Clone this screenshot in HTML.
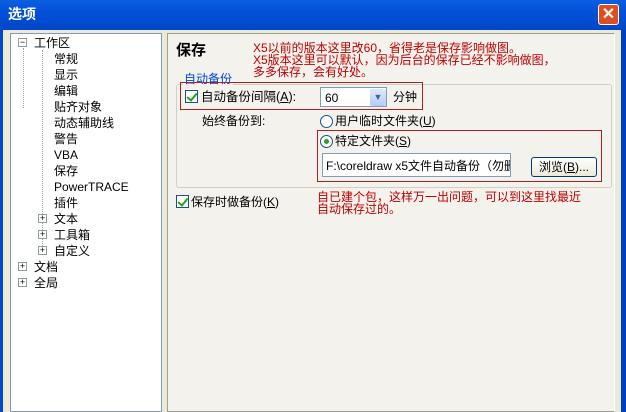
<!DOCTYPE html>
<html><head><meta charset="utf-8"><style>
*{margin:0;padding:0;box-sizing:border-box}
body{width:626px;height:412px;overflow:hidden;background:#ece9d8;font-family:"Liberation Sans","Noto Sans CJK SC","WenQuanYi Zen Hei",sans-serif;font-size:12px;color:#000;position:relative}
.a{position:absolute;white-space:nowrap;line-height:14px}
#title{left:0;top:0;width:626px;height:30px;background:linear-gradient(#0a5fe0,#0350d8 40%,#0047c8);}
.red{color:#c00000;font-size:12px;line-height:13px}
.cb{position:absolute;width:13px;height:13px;border:1px solid #1c5180;background:#fff}
.cb:after{content:"";position:absolute;left:3px;top:0px;width:4px;height:8px;border:solid #21a121;border-width:0 2px 2px 0;transform:rotate(40deg)}
.rb{position:absolute;width:13px;height:13px;border:1px solid #1c5180;border-radius:50%;background:#fff}
.tn{position:absolute;width:9px;height:9px;border:1px solid #919b9c;background:#fff;font-size:9px;line-height:7px;text-align:center;color:#000}
.dot{position:absolute;border-left:1px dotted #a0a0a0}
</style></head><body>
<div class="a" id="title"></div>
<div class="a" style="left:8px;top:7px;color:#fff;font-weight:bold;font-size:14px">选项</div>
<div class="a" style="left:598px;top:4px;width:21px;height:21px;background:#e04e20;border:1px solid #fff;border-radius:3px;color:#fff;font-weight:bold;font-size:16px;line-height:19px;text-align:center">✕</div>
<div class="a" style="left:0;top:30px;width:3px;height:382px;background:#0048d0"></div>
<div class="a" style="left:621px;top:30px;width:5px;height:382px;background:#0040c0"></div>

<div class="a" style="left:10px;top:33px;width:152px;height:379px;background:#fff;border:1px solid #7f9db9"></div>
<div class="a" style="left:167px;top:33px;width:448px;height:379px;background:#f3f2ed;border:1px solid #a0a090;border-right-color:#fff"></div>

<!-- tree -->
<div class="dot" style="left:23px;top:48px;height:60px"></div>
<div class="dot" style="left:42px;top:50px;height:200px"></div>
<div class="tn" style="left:18px;top:38px">−</div>
<div class="a" style="left:34px;top:36px">工作区</div>
<div class="a" style="left:54px;top:52px">常规</div>
<div class="a" style="left:54px;top:68px">显示</div>
<div class="a" style="left:54px;top:84px">编辑</div>
<div class="a" style="left:54px;top:100px">贴齐对象</div>
<div class="a" style="left:54px;top:116px">动态辅助线</div>
<div class="a" style="left:54px;top:132px">警告</div>
<div class="a" style="left:54px;top:148px">VBA</div>
<div class="a" style="left:54px;top:164px">保存</div>
<div class="a" style="left:54px;top:180px">PowerTRACE</div>
<div class="a" style="left:54px;top:196px">插件</div>
<div class="tn" style="left:38px;top:214px">+</div><div class="a" style="left:54px;top:212px">文本</div>
<div class="tn" style="left:38px;top:230px">+</div><div class="a" style="left:54px;top:228px">工具箱</div>
<div class="tn" style="left:38px;top:246px">+</div><div class="a" style="left:54px;top:244px">自定义</div>
<div class="tn" style="left:18px;top:262px">+</div><div class="a" style="left:34px;top:260px">文档</div>
<div class="tn" style="left:18px;top:278px">+</div><div class="a" style="left:34px;top:276px">全局</div>

<!-- right -->
<div class="a" style="left:176px;top:42px;font-size:15px;font-weight:bold;line-height:17px">保存</div>
<div class="a red" style="left:253px;top:42px">X5以前的版本这里改60，省得老是保存影响做图。</div>
<div class="a red" style="left:253px;top:54px">X5版本这里可以默认，因为后台的保存已经不影响做图，</div>
<div class="a red" style="left:253px;top:66px">多多保存，会有好处。</div>
<div class="a" style="left:176px;top:84px;width:436px;height:104px;border:1px solid #d0d0bf;border-radius:3px"></div>
<div class="a" style="left:183px;top:72px;color:#0046d5;background:#f3f2ed;padding:0 1px">自动备份</div>
<div class="a" style="left:180px;top:82px;width:243px;height:28px;border:1px solid #b02020"></div>
<div class="cb" style="left:185px;top:90px"></div>
<div class="a" style="left:201px;top:90px;font-size:12.5px">自动备份间隔(<u>A</u>):</div>
<div class="a" style="left:320px;top:87px;width:67px;height:20px;background:#fff;border:1px solid #7f9db9"></div>
<div class="a" style="left:325px;top:91px">60</div>
<div class="a" style="left:370px;top:89px;width:16px;height:17px;background:linear-gradient(#dde8fc,#b6cdf6);border-radius:2px;color:#4d6185;font-size:9px;text-align:center;line-height:17px">▼</div>
<div class="a" style="left:393px;top:90px">分钟</div>
<div class="a" style="left:202px;top:114px">始终备份到:</div>
<div class="rb" style="left:320px;top:115px"></div>
<div class="a" style="left:335px;top:114px">用户临时文件夹(<u>U</u>)</div>
<div class="a" style="left:317px;top:130px;width:285px;height:52px;border:1px solid #b02020"></div>
<div class="rb" style="left:320px;top:135px"></div>
<div class="a" style="left:324px;top:139px;width:5px;height:5px;border-radius:50%;background:#2aa02a"></div>
<div class="a" style="left:335px;top:134px">特定文件夹(<u>S</u>)</div>
<div class="a" style="left:322px;top:153px;width:189px;height:24px;background:#fff;border:1px solid #7f9db9;overflow:hidden;padding:5px 0 0 3px">F:\coreldraw x5文件自动备份（勿删</div>
<div class="a" style="left:531px;top:157px;width:66px;height:20px;border:1px solid #003c74;border-radius:3px;background:linear-gradient(#fff,#ece9d8);text-align:center;line-height:18px">浏览(<u>B</u>)...</div>
<div class="cb" style="left:176px;top:195px"></div>
<div class="a" style="left:191px;top:195px">保存时做备份(<u>K</u>)</div>
<div class="a red" style="left:317px;top:191px">自已建个包，这样万一出问题，可以到这里找最近</div>
<div class="a red" style="left:317px;top:203px">自动保存过的。</div>
</body></html>
